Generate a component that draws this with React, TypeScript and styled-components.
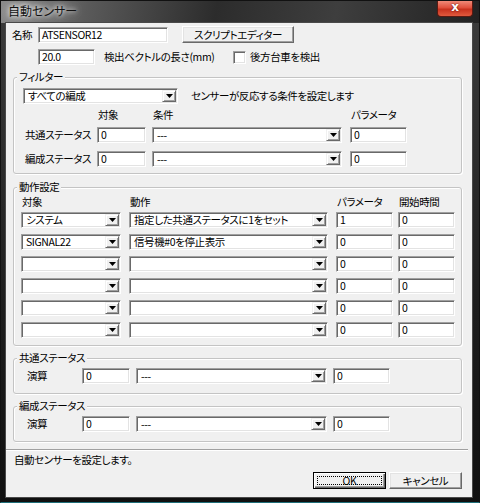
import styled, { createGlobalStyle } from "styled-components";

const actions = [
  { target: "システム", action: "指定した共通ステータスに1をセット", param: "1", start: "0" },
  { target: "SIGNAL22", action: "信号機#0を停止表示", param: "0", start: "0" },
  { target: "", action: "", param: "0", start: "0" },
  { target: "", action: "", param: "0", start: "0" },
  { target: "", action: "", param: "0", start: "0" },
  { target: "", action: "", param: "0", start: "0" },
];

function Combo({ w, value }: { w: number; value: string }) {
  return (
    <ComboBox $w={w}>
      <ComboValue>{value}</ComboValue>
      <ArrowBtn>
        <svg width="7" height="4" viewBox="0 0 7 4">
          <path d="M0 0h7L3.5 4z" fill="#000" />
        </svg>
      </ArrowBtn>
    </ComboBox>
  );
}

function App() {
  return (
    <Window>
      <GlobalStyle />
      <TitleBar>
        <Title>自動センサー</Title>
        <CloseButton>x</CloseButton>
      </TitleBar>
      <Frame>
        <Client>
          <TopRow>
            <Label $w={26}>名称</Label>
            <Field $w={130}>ATSENSOR12</Field>
            <Button $w={112} style={{ marginLeft: 14 }}>
              スクリプトエディター
            </Button>
          </TopRow>
          <SecondRow>
            <Field $w={57}>20.0</Field>
            <Label $w={129} style={{ marginLeft: 9 }}>
              検出ベクトルの長さ(mm)
            </Label>
            <Check />
            <Label>後方台車を検出</Label>
          </SecondRow>

          <Group $top={12} $pad="10px 0 6px 9px">
            <Legend>フィルター</Legend>
            <FilterTop>
              <Combo w={155} value="すべての編成" />
              <Label style={{ marginLeft: 13 }}>センサーが反応する条件を設定します</Label>
            </FilterTop>
            <Grid $cols="74px 55px 198px 57px" style={{ marginTop: 4, marginBottom: 5 }}>
              <span />
              <Head>対象</Head>
              <Head>条件</Head>
              <Head>パラメータ</Head>
            </Grid>
            <Grid $cols="74px 55px 198px 57px" $gap={8}>
              <RowLabel>共通ステータス</RowLabel>
              <Field $w={49}>0</Field>
              <Combo w={190} value="---" />
              <Field $w={57}>0</Field>
              <RowLabel>編成ステータス</RowLabel>
              <Field $w={49}>0</Field>
              <Combo w={190} value="---" />
              <Field $w={57}>0</Field>
            </Grid>
          </Group>

          <Group $top={13} $pad="7px 0 7px 7px">
            <Legend>動作設定</Legend>
            <Grid $cols="108px 207px 62px 57px" style={{ marginBottom: 3 }}>
              <Head>対象</Head>
              <Head>動作</Head>
              <Head>パラメータ</Head>
              <Head>開始時間</Head>
            </Grid>
            <Grid $cols="108px 207px 62px 57px" $gap={6}>
              {actions.map((a, i) => (
                <ActionRow key={i}>
                  <Combo w={100} value={a.target} />
                  <Combo w={199} value={a.action} />
                  <Field $w={57}>{a.param}</Field>
                  <Field $w={57}>{a.start}</Field>
                </ActionRow>
              ))}
            </Grid>
          </Group>

          <Group $top={12} $pad="9px 0 9px 13px">
            <Legend>共通ステータス</Legend>
            <Grid $cols="55px 54px 197px 57px">
              <Label>演算</Label>
              <Field $w={48}>0</Field>
              <Combo w={191} value="---" />
              <Field $w={57}>0</Field>
            </Grid>
          </Group>

          <Group $top={12} $pad="9px 0 9px 13px">
            <Legend>編成ステータス</Legend>
            <Grid $cols="55px 54px 197px 57px">
              <Label>演算</Label>
              <Field $w={48}>0</Field>
              <Combo w={191} value="---" />
              <Field $w={57}>0</Field>
            </Grid>
          </Group>

          <Separator />
          <StatusText>自動センサーを設定します。</StatusText>
          <ButtonRow>
            <Button $w={73} $default>
              <Focus />
              OK
            </Button>
            <Button $w={73}>キャンセル</Button>
          </ButtonRow>
        </Client>
      </Frame>
    </Window>
  );
}

export default App;

const GlobalStyle = createGlobalStyle`
  html, body {
    margin: 0;
    padding: 0;
    background: #000;
    overflow: hidden;
  }
  body {
    font-family: "Noto Sans CJK JP", "Liberation Sans", sans-serif;
    font-feature-settings: "palt";
    font-size: 10.5px;
    font-weight: 400;
    letter-spacing: -0.4px;
  }
`;

const Window = styled.div`
  width: 480px;
  height: 503px;
  display: flex;
  flex-direction: column;
  background: linear-gradient(180deg, #3c3c3c 0%, #1e1e1e 60%, #101010 100%);
  box-sizing: border-box;
  border: 1px solid #111;
  border-bottom-color: #1f6f7a;
  color: #000;
`;

const TitleBar = styled.div`
  height: 22px;
  display: flex;
  justify-content: space-between;
  align-items: flex-start;
  padding-left: 7px;
  background: linear-gradient(100deg, #8a8a8a 0%, #5a5a5a 18%, #2c2c2c 45%, #3e3e3e 70%, #222 100%);
`;

const Title = styled.div`
  font-size: 12px;
  letter-spacing: 0;
  line-height: 20px;
  color: #111;
  text-shadow: 0 0 4px #fff, 0 0 8px rgba(255, 255, 255, 0.9), 0 0 12px rgba(255, 255, 255, 0.6);
`;

const CloseButton = styled.div`
  width: 36px;
  height: 16px;
  margin-right: 6px;
  box-sizing: border-box;
  border: 1px solid #5a1a12;
  border-top: none;
  border-radius: 0 0 4px 4px;
  background: linear-gradient(180deg, #f08a78 0%, #e0503c 45%, #c8321e 55%, #e05a3e 100%);
  color: #fff;
  font-family: "DejaVu Sans", sans-serif;
  font-weight: bold;
  font-size: 12px;
  letter-spacing: 0;
  line-height: 13px;
  text-align: center;
  text-shadow: 0 0 2px #400;
`;

const Frame = styled.div`
  flex: 1;
  display: flex;
  padding: 0 7px 5px 5px;
`;

const Client = styled.div`
  flex: 1;
  display: flex;
  flex-direction: column;
  background: #f0f0f0;
  box-shadow: 0 0 0 1px #4a4a4a;
`;

const TopRow = styled.div`
  display: flex;
  align-items: center;
  height: 17px;
  margin-top: 3px;
  padding-left: 6px;
`;

const SecondRow = styled.div`
  display: flex;
  align-items: center;
  height: 16px;
  margin-top: 6px;
  padding-left: 32px;
`;

const Label = styled.span<{ $w?: number }>`
  display: inline-block;
  ${(p) => (p.$w ? `width: ${p.$w}px;` : "")}
  line-height: 14px;
  white-space: nowrap;
`;

const RowLabel = styled.span`
  padding-left: 2px;
  line-height: 16px;
  white-space: nowrap;
`;

const Head = styled.span`
  padding-left: 1px;
  line-height: 14px;
  white-space: nowrap;
`;

const sunken = `
  box-sizing: border-box;
  height: 16px;
  background: #fff;
  border: 1px solid;
  border-color: #a0a0a0 #fff #fff #a0a0a0;
  box-shadow: inset 1px 1px 0 #696969, inset -1px -1px 0 #e3e3e3;
`;

const Field = styled.div<{ $w: number }>`
  ${sunken}
  width: ${(p) => p.$w}px;
  padding: 0 3px;
  line-height: 14px;
  white-space: nowrap;
  overflow: hidden;
`;

const ComboBox = styled.div<{ $w: number }>`
  ${sunken}
  width: ${(p) => p.$w}px;
  display: flex;
  align-items: stretch;
`;

const ComboValue = styled.span`
  flex: 1;
  padding-left: 4px;
  line-height: 14px;
  white-space: nowrap;
  overflow: hidden;
`;

const ArrowBtn = styled.span`
  width: 14px;
  margin: 1px;
  box-sizing: border-box;
  display: flex;
  align-items: center;
  justify-content: center;
  background: #f0f0f0;
  border: 1px solid;
  border-color: #f0f0f0 #696969 #696969 #f0f0f0;
  box-shadow: inset 1px 1px 0 #fff, inset -1px -1px 0 #a0a0a0;
`;

const Check = styled.span`
  ${sunken}
  width: 13px;
  height: 13px;
  margin-right: 4px;
`;

const Button = styled.div<{ $w: number; $default?: boolean }>`
  position: relative;
  box-sizing: border-box;
  width: ${(p) => p.$w}px;
  height: 17px;
  display: flex;
  align-items: center;
  justify-content: center;
  background: #f0f0f0;
  border: 1px solid;
  border-color: ${(p) => (p.$default ? "#000" : "#fff #696969 #696969 #fff")};
  box-shadow: ${(p) =>
    p.$default
      ? "inset 1px 1px 0 #fff, inset -1px -1px 0 #696969, inset -2px -2px 0 #a0a0a0"
      : "inset -1px -1px 0 #a0a0a0, inset 1px 1px 0 #e3e3e3"};
  line-height: 14px;
  white-space: nowrap;
`;

const Focus = styled.span`
  position: absolute;
  inset: 3px;
  border: 1px dotted #000;
`;

const Group = styled.div<{ $top: number; $pad: string }>`
  position: relative;
  margin: ${(p) => p.$top}px 10px 0 7px;
  padding: ${(p) => p.$pad};
  border: 1px solid #c4c4c4;
  border-radius: 3px;
  box-shadow: inset 1px 1px 0 #fff, 1px 1px 0 #fff;
`;

const Legend = styled.span`
  position: absolute;
  top: -8px;
  left: 3px;
  padding: 0 2px;
  background: #f0f0f0;
  line-height: 14px;
  white-space: nowrap;
`;

const FilterTop = styled.div`
  display: flex;
  align-items: center;
  height: 16px;
`;

const Grid = styled.div<{ $cols: string; $gap?: number }>`
  display: grid;
  grid-template-columns: ${(p) => p.$cols};
  row-gap: ${(p) => p.$gap ?? 0}px;
  align-items: center;
`;

const ActionRow = styled.div`
  display: contents;
`;

const Separator = styled.div`
  margin-top: 7px;
  margin-right: 4px;
  height: 0;
  border-top: 1px solid #a0a0a0;
  border-bottom: 1px solid #fff;
`;

const StatusText = styled.div`
  padding-left: 8px;
  margin-top: 2px;
  line-height: 14px;
`;

const ButtonRow = styled.div`
  display: flex;
  justify-content: flex-end;
  gap: 3px;
  margin-top: 5px;
  padding-right: 10px;
`;
